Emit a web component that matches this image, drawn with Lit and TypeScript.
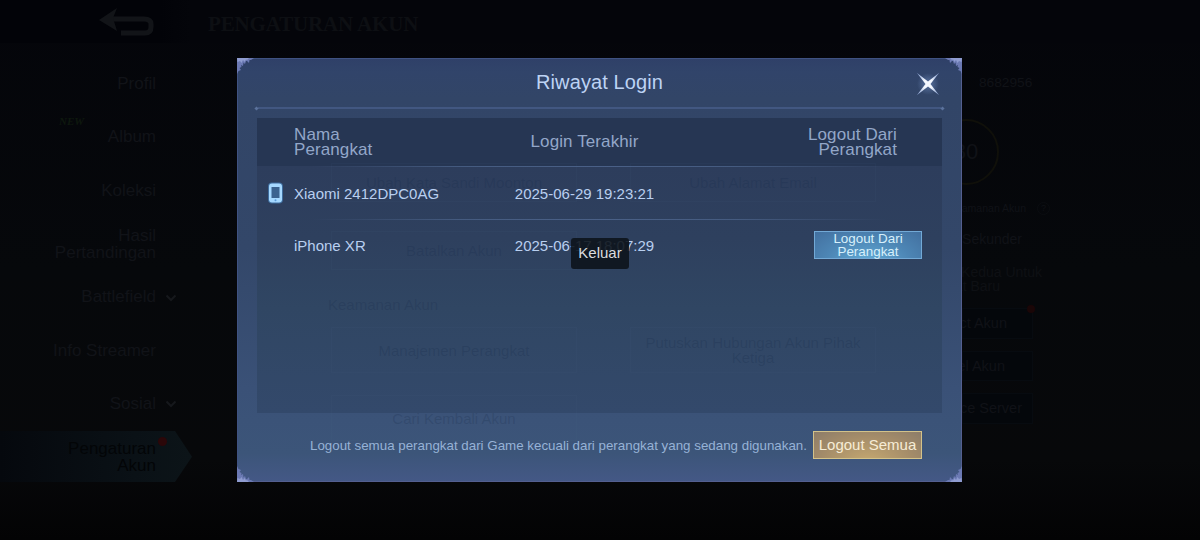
import { LitElement, html, css, svg } from 'lit';
import { customElement, property, state } from 'lit/decorators.js';
import { classMap } from 'lit/directives/class-map.js';

const MENU = [
    { lines: ['Profil'] },
    { lines: ['Album'], baru: true },
    { lines: ['Koleksi'] },
    { lines: ['Hasil', 'Pertandingan'] },
    { lines: ['Battlefield'], submenu: true },
    { lines: ['Info Streamer'] },
    { lines: ['Sosial'], submenu: true },
    { lines: ['Pengaturan', 'Akun'], activo: true },
];

@customElement('menu-akun')
export class MenuAkun extends LitElement {
    static styles = [
        css`
            :host {
                display: flex;
                flex-direction: column;
                padding-top: 14px;
                font-size: 17px;
                line-height: 17px;
                color: #111318;
            }
            .item {
                display: grid;
                grid-template-columns: 156px 28px;
                align-items: center;
                height: 53.3px;
                text-align: right;
            }
            .item.activo {
                box-sizing: border-box;
                width: 192px;
                color: #030507;
                background: linear-gradient(90deg, #05080d, #0a1116 70%, #0c1418);
                clip-path: polygon(0 1px, 175px 1px, 100% 50%, 175px 52px, 0 52px);
            }
            .label {
                position: relative;
            }
            .baru {
                position: absolute;
                left: 59px;
                top: -14px;
                font: italic bold 11px/14px "Liberation Serif", serif;
                color: #0e180e;
            }
            .flecha {
                display: block;
                margin: 2px 0 0 9px;
            }
            .punto {
                width: 9px;
                height: 9px;
                margin: -30px 0 0 2px;
                border-radius: 50%;
                background: #2b0709;
            }
        `
    ];

    render() {
        return html`
        ${MENU.map(item => html`
        <div class=${classMap({ item: true, activo: !!item.activo })}>
            <div class="label">
                ${item.baru ? html`<span class="baru">NEW</span>` : ''}
                ${item.lines.map(line => html`<div>${line}</div>`)}
            </div>
            ${item.submenu ? html`
            <svg class="flecha" width="12" height="8" viewBox="0 0 12 8" fill="none" stroke="#16181c" stroke-width="2">
                <path d="M1.5 1.5 L6 6 L10.5 1.5" />
            </svg>` : ''}
            ${item.activo ? html`<div class="punto"></div>` : ''}
        </div>`)}
        `;
    }
}

@customElement('panel-cuenta')
export class PanelCuenta extends LitElement {
    static styles = [
        css`
            :host {
                display: flex;
                flex-direction: column;
                align-items: flex-start;
                padding-top: 32px;
                color: #101217;
                font-size: 14px;
                white-space: nowrap;
            }
            .id {
                margin-left: 17px;
                line-height: 16px;
                font-size: 13.7px;
            }
            .nivel {
                display: flex;
                align-items: center;
                justify-content: center;
                box-sizing: border-box;
                width: 66px;
                height: 66px;
                margin: 28px 0 0 -29px;
                border: 2px solid #10100a;
                border-radius: 50%;
                font-size: 22px;
            }
            .linea {
                display: flex;
                justify-content: flex-end;
                align-items: center;
                text-align: right;
                line-height: 14px;
            }
            .linea.chica {
                width: 66px;
                margin-top: 16px;
                font-size: 10.5px;
            }
            .ayuda {
                flex: none;
                width: 11px;
                height: 11px;
                margin: 0 -22px 0 11px;
                border: 1px solid #0b0d11;
                border-radius: 50%;
                font-size: 9px;
                line-height: 11px;
                text-align: center;
            }
            .linea.media {
                width: 60px;
                margin-top: 17px;
            }
            .linea.doble {
                width: 80px;
                margin-top: 19px;
                color: #0e1014;
            }
            .botones {
                display: flex;
                flex-direction: column;
                gap: 12px;
                width: 71px;
                margin-top: 15px;
            }
            .boton {
                display: flex;
                justify-content: flex-end;
                align-items: center;
                box-sizing: border-box;
                height: 30.5px;
                border: 1px solid #070b10;
                background: #04070b;
                font-size: 14.5px;
            }
            .boton.uno {
                padding-right: 25px;
            }
            .boton.dos {
                padding-right: 27px;
            }
            .boton.tres {
                padding-right: 10px;
            }
            .punto {
                flex: none;
                width: 8px;
                height: 8px;
                margin: -28px -28px 0 20px;
                border-radius: 50%;
                background: #1a0607;
            }
        `
    ];

    render() {
        return html`
        <div class="id">8682956</div>
        <div class="nivel">80</div>
        <div class="linea chica">Keamanan Akun <span class="ayuda">?</span></div>
        <div class="linea media">Sandi Sekunder</div>
        <div class="linea doble">
            <div>Verifikasi Kedua Untuk<br />Perangkat Baru&emsp;&emsp;&emsp;</div>
        </div>
        <div class="botones">
            <div class="boton uno">Connect Akun<span class="punto"></span></div>
            <div class="boton dos">Cancel Akun</div>
            <div class="boton tres">Advance Server</div>
        </div>
        `;
    }
}

@customElement('riwayat-login')
export class RiwayatLogin extends LitElement {
    static styles = [
        css`
            :host {
                position: relative;
                display: flex;
                flex-direction: column;
                box-sizing: border-box;
                padding: 0 20px;
                color: #b9cff0;
                background: linear-gradient(180deg, #2f4068 0, #31446a 14px, #324567 40px, #334769 190px, #3a5177 330px, #3c5579 395px, #445886 100%);
                box-shadow: inset 1px 1px 0 #3f5282, inset -1px -1px 0 #545f90;
            }
            .esquina {
                position: absolute;
                left: 0;
                top: 0;
            }
            .esquina.der {
                left: auto;
                right: 0;
                transform: scaleX(-1);
            }
            .esquina.abajo {
                top: auto;
                bottom: 0;
                transform: scaleY(-1);
            }
            .esquina.abajo.der {
                transform: scale(-1);
            }
            .titulo {
                display: grid;
                grid-template-columns: 1fr auto 1fr;
                align-items: center;
                height: 48px;
                font-size: 20px;
                letter-spacing: 0.1px;
                color: #bdd3f4;
            }
            .titulo span {
                grid-column: 2;
            }
            .cerrar {
                justify-self: end;
                margin: 4px -1px 0 0;
                display: block;
            }
            .divisor {
                display: flex;
                align-items: center;
                margin: 0 -2px;
                height: 4px;
            }
            .divisor i {
                width: 3px;
                height: 3px;
                background: #5b729c;
                transform: rotate(45deg);
            }
            .divisor b {
                flex: 1;
                height: 2px;
                background: #425781;
            }
            .tabla {
                position: relative;
                height: 295px;
                margin-top: 8px;
                background: linear-gradient(180deg, #2d3d5c 48px, #2e405e 120px, #304663 190px, #33496b 100%);
            }
            .fila {
                position: relative;
                display: grid;
                grid-template-columns: 37px 200px 181px 1fr;
                align-items: center;
                box-sizing: border-box;
                height: 52.5px;
                padding-top: 3px;
                font-size: 15px;
                line-height: 18px;
            }
            .fila.cabeza {
                height: 48px;
                padding: 0 0 1px;
                font-size: 17px;
                letter-spacing: 0.1px;
                line-height: 15px;
                color: #93a7c9;
                background: #263653;
            }
            .cabeza .accion {
                padding-right: 45px;
                text-align: right;
            }
            .fecha {
                justify-self: center;
            }
            .telefono {
                display: block;
                margin: -1px 0 0 8px;
            }
            .raya {
                height: 1px;
                margin-bottom: -1px;
                background: linear-gradient(90deg, transparent 8%, #455b80 30%, #4a6087 50%, #455b80 70%, transparent 92%);
            }
            .boton {
                box-sizing: border-box;
                border: 1px solid #72a9d6;
                padding: 0;
                font-family: inherit;
                text-align: center;
            }
            .azul {
                display: block;
                justify-self: end;
                width: 108px;
                height: 28px;
                margin: -2px 20px 0 0;
                font-size: 13.4px;
                line-height: 13px;
                color: #d6f0fb;
                background: radial-gradient(ellipse at 50% 115%, #62abd6, #4d86b5 55%, #426f9f);
            }
            .azul span {
                display: block;
                margin-top: -1px;
            }
            .pie {
                display: flex;
                justify-content: flex-end;
                align-items: center;
                gap: 6px;
                height: 28px;
                margin: 18px 20px 0 0;
                font-size: 13.35px;
                color: #96b2d6;
            }
            .dorado {
                width: 109px;
                height: 28px;
                padding-bottom: 1px;
                border: 1px solid #d3c289;
                font-size: 15px;
                color: #f6ecd6;
                white-space: nowrap;
                background: radial-gradient(ellipse at 50% 115%, #c5a870, #a48c69 60%, #8c7c69);
            }
            /* faint settings page showing through the dialog */
            .sombra {
                position: absolute;
                inset: 0;
                display: grid;
                grid-template-columns: 246px 246px;
                column-gap: 53px;
                align-content: start;
                padding: 105px 0 0 94px;
                font-size: 15px;
                line-height: 15px;
                color: rgba(22, 42, 74, 0.22);
                text-align: center;
                pointer-events: none;
            }
            .sombra div {
                display: flex;
                align-items: center;
                justify-content: center;
                box-sizing: border-box;
            }
            .sombra .caja {
                height: 39px;
                border: 1px solid rgba(90, 120, 160, 0.06);
            }
            .sombra .izq {
                grid-column: 1;
                margin-top: 29px;
            }
            .sombra .sub {
                grid-column: 1 / 3;
                justify-content: flex-start;
                height: 16px;
                margin: 26px 0 15px -3px;
            }
            .sombra .alta {
                height: 46px;
            }
            .sombra .abajo {
                height: 46px;
                margin-top: 22px;
            }
        `
    ];

    @property({ type: Array }) perangkat: any[] = [];

    esquina(lado: string) {
        return html`
        <svg class="esquina ${lado}" width="17" height="17" viewBox="0 0 17 17">
            <path fill="#6b79b3" d="M0 0 H17 L14 2 L12.5 2 L12 5 L10 3 L9 3 L8 6 L6.5 4.5 L6 8 L4 7 L4.5 9 L2.5 10 L4 12 L1.5 13 L0 16 Z" />
            <path fill="#8f9cd0" d="M0 0 H12 L10 2 L9 1.5 L7.5 4 L6 2 L4.5 5 L3 3 L0.5 4 Z" />
        </svg>`;
    }

    render() {
        return html`
        ${this.esquina('')}
        ${this.esquina('der')}
        ${this.esquina('abajo')}
        ${this.esquina('abajo der')}
        <div class="titulo">
            <span>Riwayat Login</span>
            <svg class="cerrar" width="30" height="30" viewBox="0 0 30 30">
                <defs>
                    <radialGradient id="brillo">
                        <stop offset="0" stop-color="#8fb0e8" stop-opacity="0.45" />
                        <stop offset="1" stop-color="#8fb0e8" stop-opacity="0" />
                    </radialGradient>
                    <radialGradient id="aspa" gradientUnits="userSpaceOnUse" cx="15" cy="15" r="16">
                        <stop offset="0.3" stop-color="#f4f8ff" />
                        <stop offset="0.7" stop-color="#a9bce2" />
                        <stop offset="1" stop-color="#7088b8" />
                    </radialGradient>
                </defs>
                <circle cx="15" cy="15" r="11" fill="url(#brillo)" />
                <path fill="url(#aspa)" d="M3.8 3.8 L15 12.5 L26.2 3.8 L17.5 15 L26.2 26.2 L15 17.5 L3.8 26.2 L12.5 15 Z" />
            </svg>
        </div>
        <div class="divisor"><i></i><b></b><i></i></div>
        <div class="tabla">
            <div class="fila cabeza">
                <span></span>
                <div>Nama<br />Perangkat</div>
                <div class="fecha">Login Terakhir</div>
                <div class="accion">Logout Dari<br />Perangkat</div>
            </div>
            ${this.perangkat.map(p => html`
            <div class="raya"></div>
            <div class="fila">
                ${p.actual ? this.telefono() : html`<span></span>`}
                <div>${p.nama}</div>
                <div class="fecha">${p.login}</div>
                ${p.actual ? '' : html`<button class="boton azul"><span>Logout Dari<br />Perangkat</span></button>`}
            </div>`)}
        </div>
        <div class="pie">
            <span>Logout semua perangkat dari Game kecuali dari perangkat yang sedang digunakan.</span>
            <button class="boton dorado">Logout Semua</button>
        </div>
        <div class="sombra">
            <div class="caja">Ubah Kata Sandi Moonton</div>
            <div class="caja">Ubah Alamat Email</div>
            <div class="caja izq">Batalkan Akun</div>
            <div class="sub">Keamanan Akun</div>
            <div class="caja alta">Manajemen Perangkat</div>
            <div class="caja alta">Putuskan Hubungan Akun Pihak Ketiga</div>
            <div class="caja izq abajo">Cari Kembali Akun</div>
        </div>
        `;
    }

    telefono() {
        return html`
        <svg class="telefono" width="20" height="26" viewBox="0 0 20 26">
            ${svg`
            <rect x="3" y="2.5" width="15" height="21" rx="4" fill="#4f9be0" opacity="0.5" />
            <rect x="4" y="3.5" width="13" height="19" rx="3" fill="#a5d8ff" />
            <rect x="6.5" y="7" width="8" height="11" fill="#3a628f" />
            <circle cx="10.5" cy="20.2" r="1" fill="#5b9ad6" />`}
        </svg>`;
    }
}

@customElement('app-root')
export class AppRoot extends LitElement {
    static styles = [
        css`
            :host {
                position: relative;
                display: grid;
                grid-template-columns: 237px 725px 238px;
                grid-template-rows: 43px 497px;
                width: 1200px;
                height: 540px;
                overflow: hidden;
                font-family: "Liberation Sans", Arial, sans-serif;
                background: linear-gradient(180deg, #04050a, #06080b 50%, #07080a 85%, #030304);
            }
            .barra {
                grid-column: 1 / 4;
                display: flex;
                align-items: center;
                padding-left: 99px;
                background: linear-gradient(90deg, #020308 160px, #04050a 190px);
            }
            .judul {
                margin: 4px 0 0 52px;
                font: bold 21px/24px "Liberation Serif", serif;
                letter-spacing: -0.15px;
                color: #0d0f13;
            }
            riwayat-login {
                height: 424px;
                margin-top: 15px;
            }
            .toast {
                position: absolute;
                left: 571px;
                top: 238px;
                box-sizing: border-box;
                width: 58px;
                height: 31px;
                border-radius: 3px;
                background: rgba(13, 20, 28, 0.9);
                color: #dadcdf;
                font-size: 15px;
                line-height: 30px;
                text-align: center;
            }
        `
    ];

    @state() perangkat = [
        { nama: 'Xiaomi 2412DPC0AG', login: '2025-06-29 19:23:21', actual: true },
        { nama: 'iPhone XR', login: '2025-06-17 18:07:29', actual: false },
    ];

    render() {
        return html`
        <div class="barra">
            <svg width="57" height="32" viewBox="0 0 57 32" fill="none" stroke="#121418">
                <path stroke-width="5" d="M8 13 H45 Q52 13 52 18 V21 Q52 27 46 27 H22" />
                <path fill="#121418" stroke="none" d="M0 14 L18 2 L14 12 L18 25 Z" />
            </svg>
            <div class="judul">PENGATURAN AKUN</div>
        </div>
        <menu-akun></menu-akun>
        <riwayat-login .perangkat=${this.perangkat}></riwayat-login>
        <panel-cuenta></panel-cuenta>
        <div class="toast">Keluar</div>
        `;
    }
}
